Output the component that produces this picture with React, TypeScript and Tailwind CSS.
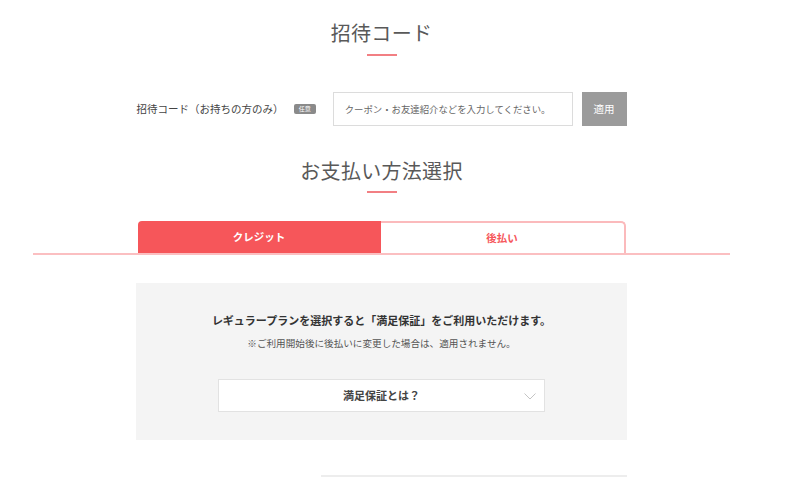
import React from "react";

const jp = { fontFamily: '"Noto Sans CJK JP", "Noto Sans", sans-serif' };

function SectionTitle({ children, top, gap }: { children: React.ReactNode; top: string; gap: string }) {
  return (
    <div className={`flex flex-col items-center ${top}`}>
      <h2 className="h-[30px] text-[20px] leading-[30px] text-[#595959] font-normal tracking-[0.3px]">{children}</h2>
      <div className={`${gap} h-[2px] w-[30px] bg-[#f27f83]`} />
    </div>
  );
}

export default function App() {
  return (
    <div className="w-[800px] h-[477px] bg-white overflow-hidden" style={jp}>
      <div className="ml-[33px] w-[697px]">
        <SectionTitle top="pt-[18px]" gap="mt-[6px]">招待コード</SectionTitle>

        <div className="mt-[36px] mx-auto w-[490px] flex items-center h-[34px]">
          <span className="text-[10.5px] text-[#444]">招待コード（お持ちの方のみ）</span>
          <span className="ml-[11px] flex h-[10px] w-[22px] items-center justify-center rounded-[2px] bg-[#8a8a8a] text-[6px] leading-none text-white">任意</span>
          <input
            className="ml-[17px] h-[34px] w-[241px] border border-[#dcdcdc] bg-white px-[11px] text-[9.4px] text-[#555] placeholder:text-[#666] outline-none"
            placeholder="クーポン・お友達紹介などを入力してください。"
          />
          <button className="ml-[9px] h-[34px] w-[45px] bg-[#9b9b9b] text-[10.5px] text-white">適用</button>
        </div>

        <SectionTitle top="mt-[30px]" gap="mt-[5px]">お支払い方法選択</SectionTitle>

        <div className="mt-[28px] flex justify-center border-b-2 border-[#fbbfc1]">
          <div className="flex h-[32px] w-[488px]">
            <div className="flex flex-1 items-center justify-center rounded-tl-[4px] bg-[#f6565a] text-[10.5px] font-bold text-white">クレジット</div>
            <div className="flex flex-1 items-center justify-center rounded-tr-[5px] border-t-2 border-r-2 border-solid border-[color:#fbbabc] bg-white text-[10.5px] font-bold text-[#f6565a]">後払い</div>
          </div>
        </div>

        <div className="mt-[28px] mx-auto w-[491px] h-[157px] bg-[#f4f4f4] flex flex-col items-center">
          <p className="mt-[29px] text-[11px] leading-[16px] font-bold text-[#333]">レギュラープランを選択すると「満足保証」をご利用いただけます。</p>
          <p className="mt-[8px] text-[9.6px] leading-[14px] text-[#555]">※ご利用開始後に後払いに変更した場合は、適用されません。</p>
          <div className="relative mt-[29px] flex h-[33px] w-[327px] items-center justify-center border border-[#e2e2e2] bg-white">
            <span className="text-[11px] font-bold text-[#444]">満足保証とは？</span>
            <svg className="absolute right-[8px] top-[13px]" width="12" height="7" viewBox="0 0 12 7" fill="none">
              <path d="M0.5 0.5 L6 6 L11.5 0.5" stroke="#c4c4c4" strokeWidth="1" />
            </svg>
          </div>
        </div>

        <div className="mt-[35px] ml-[288px] w-[306px] border-t-2 border-[#ededed]" />
      </div>
    </div>
  );
}
